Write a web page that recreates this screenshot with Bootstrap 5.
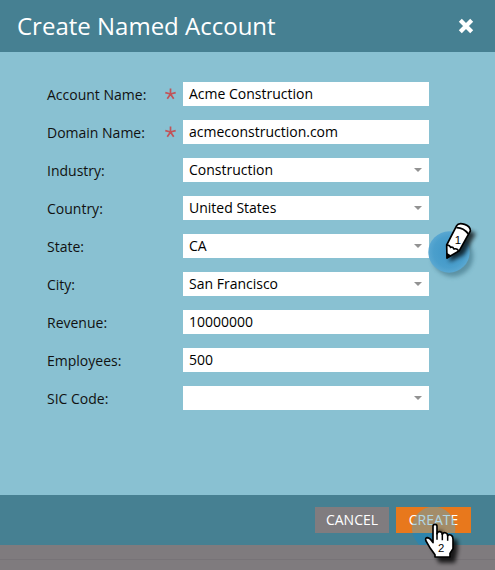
<!DOCTYPE html>
<html lang="en">
<head>
<meta charset="utf-8">
<meta name="viewport" content="width=device-width, initial-scale=1">
<title>Create Named Account</title>
<link href="https://cdn.jsdelivr.net/npm/bootstrap@5.3.0/dist/css/bootstrap.min.css" rel="stylesheet">
<style>
body{font-family:"Open Sans","Noto Sans",sans-serif;font-size:14px;line-height:20px;color:#111;background:#7f7b7e;height:570px;overflow:hidden}
.dialog-box{height:545px;background:#89c1d2}
.dialog-head{height:52px;background:#468092;padding:0 21px 0 17px}
.dialog-head h1{font-size:24px;line-height:32px;font-weight:400}
.close-x{width:16px;height:16px;line-height:0}
.dialog-fields{padding:30px 66px 0 47px;gap:14px}
.field-row{height:24px}
.field-label{flex:0 0 118px;padding-top:3px}
.req-star{flex:0 0 18px;padding-top:6px}
.field-row .form-control{height:24px;padding:0 6px;font-size:14px;line-height:24px;color:#000;background:#fff;border:0;border-radius:0}
.arrow-down{width:8px;height:4px;margin:-1px 1px 0 0}
.dialog-foot{height:50px;background:#468092;padding:0 24px 0 0;gap:7px}
.dialog-foot .btn{height:26px;padding:0;border:0;border-radius:0;font-size:14px;line-height:26px;color:#fff}
.btn-cancel,.btn-cancel:hover{width:74px;background:#807c7f}
.btn-create,.btn-create:hover{width:75px;background:#e8781c}
.under-line{height:1px;margin-top:14px;background:#777377}
.marker{position:absolute;pointer-events:none;overflow:visible}
.marker-one{left:420px;top:210px}
.marker-two{left:405px;top:500px}
.marker text{font-family:"Liberation Sans",Arial,sans-serif;fill:#000}
</style>
<script src="https://cdn.jsdelivr.net/npm/bootstrap@5.3.0/dist/js/bootstrap.bundle.min.js"></script>
</head>
<body class="position-relative">
<main class="dialog-box d-flex flex-column">
  <header class="dialog-head d-flex align-items-center justify-content-between text-white flex-shrink-0">
    <h1 class="m-0">Create Named Account</h1>
    <button type="button" class="close-x btn p-0 border-0" aria-label="Close"><svg width="16" height="16" viewBox="0 0 16 16"><path d="M3.800 3.800l8.400 8.400M12.200 3.800l-8.400 8.400" stroke="#fff" stroke-width="4.200" stroke-linecap="square"/></svg></button>
  </header>
  <form class="dialog-fields d-flex flex-column flex-grow-1">
    <div class="field-row d-flex"><label class="field-label">Account Name:</label><span class="req-star"><svg class="d-block" width="12" height="12" viewBox="0 0 12 12"><path d="M5.500 6V.5M5.500 6L.3 4.600M5.500 6l5.200-1.400M5.500 6l-3.200 4.700M5.500 6l3.200 4.700" stroke="#c25358" stroke-width="1.700"/></svg></span><div class="form-control">Acme Construction</div></div>
    <div class="field-row d-flex"><label class="field-label">Domain Name:</label><span class="req-star"><svg class="d-block" width="12" height="12" viewBox="0 0 12 12"><path d="M5.500 6V.5M5.500 6L.3 4.600M5.500 6l5.200-1.400M5.500 6l-3.200 4.700M5.500 6l3.200 4.700" stroke="#c25358" stroke-width="1.700"/></svg></span><div class="form-control">acmeconstruction.com</div></div>
    <div class="field-row d-flex"><label class="field-label">Industry:</label><span class="req-star"></span><div class="form-control d-flex justify-content-between align-items-center">Construction<svg class="arrow-down" viewBox="0 0 8 4"><path d="M0 0h8L4 4z" fill="#929292"/></svg></div></div>
    <div class="field-row d-flex"><label class="field-label">Country:</label><span class="req-star"></span><div class="form-control d-flex justify-content-between align-items-center">United States<svg class="arrow-down" viewBox="0 0 8 4"><path d="M0 0h8L4 4z" fill="#929292"/></svg></div></div>
    <div class="field-row d-flex"><label class="field-label">State:</label><span class="req-star"></span><div class="form-control d-flex justify-content-between align-items-center">CA<svg class="arrow-down" viewBox="0 0 8 4"><path d="M0 0h8L4 4z" fill="#929292"/></svg></div></div>
    <div class="field-row d-flex"><label class="field-label">City:</label><span class="req-star"></span><div class="form-control d-flex justify-content-between align-items-center">San Francisco<svg class="arrow-down" viewBox="0 0 8 4"><path d="M0 0h8L4 4z" fill="#929292"/></svg></div></div>
    <div class="field-row d-flex"><label class="field-label">Revenue:</label><span class="req-star"></span><div class="form-control">10000000</div></div>
    <div class="field-row d-flex"><label class="field-label">Employees:</label><span class="req-star"></span><div class="form-control">500</div></div>
    <div class="field-row d-flex"><label class="field-label">SIC Code:</label><span class="req-star"></span><div class="form-control d-flex justify-content-end align-items-center"><svg class="arrow-down" viewBox="0 0 8 4"><path d="M0 0h8L4 4z" fill="#929292"/></svg></div></div>
  </form>
  <footer class="dialog-foot d-flex align-items-center justify-content-end flex-shrink-0">
    <button type="button" class="btn btn-cancel">CANCEL</button>
    <button type="button" class="btn btn-create">CREATE</button>
  </footer>
</main>
<div class="under-line"></div>

<svg class="marker marker-one" width="75" height="75" viewBox="0 0 225 225">
  <defs>
    <filter id="soft" x="-50%" y="-50%" width="200%" height="200%"><feGaussianBlur stdDeviation="7"/></filter>
    <radialGradient id="glow"><stop offset="0" stop-color="#3f96c8"/><stop offset=".75" stop-color="#4b9fcc"/><stop offset="1" stop-color="#5aa8d2"/></radialGradient>
  </defs>
  <circle cx="98" cy="138" r="62" fill="#2e6274" opacity=".5" filter="url(#soft)"/>
  <circle cx="87" cy="126" r="62" fill="url(#glow)"/>
  <path d="M88 156L94 118 128 55 168 70 132 134z" fill="#000" opacity=".75" filter="url(#soft)"/>
  <path d="M81 144L80 105 110 47Q115 37 134 43 152 49 151 63L118 122z" fill="#fff" stroke="#000" stroke-width="5" stroke-linejoin="round"/>
  <path d="M81 106Q88 104 92 112 98 109 102 117 110 114 116 122M109 53Q130 52 145 72" fill="none" stroke="#000" stroke-width="5"/>
  <path d="M80 146V128L95 137z"/>
  <text x="104" y="101" font-size="34">1</text>
</svg>
<svg class="marker marker-two" width="70" height="70" viewBox="0 0 210 210">
  <defs>
    <clipPath id="over-button"><path d="M0 21H198V99H0z"/></clipPath>
    <clipPath id="below-button"><path d="M0 99H198V135H0z"/></clipPath>
  </defs>
  <circle cx="86" cy="85" r="65" fill="#2786b4" opacity=".75" clip-path="url(#below-button)"/>
  <circle cx="86" cy="85" r="65" fill="#52a6c8" opacity=".45" clip-path="url(#over-button)"/>
  <path d="M98 92L113 92V112L158 120V152L150 188H102L80 138z" fill="#000" opacity=".8" filter="url(#soft)"/>
  <path d="M84 123V79Q84 73 90 73 96 73 96 79V101Q98 94 105 95 111 96 112 103 116 96 123 99 128 101 128 107 133 102 139 106 144 109 144 118V146L135 160V171H90V164L76 145 63 123Q59 113 68 113 75 114 84 128z" fill="#fff" stroke="#000" stroke-width="5" stroke-linejoin="round"/>
  <path d="M96 98V119M112 101V121M128 106V122" stroke="#000" stroke-width="4.500"/>
  <text x="99" y="155" font-size="34">2</text>
</svg>
</body>
</html>
